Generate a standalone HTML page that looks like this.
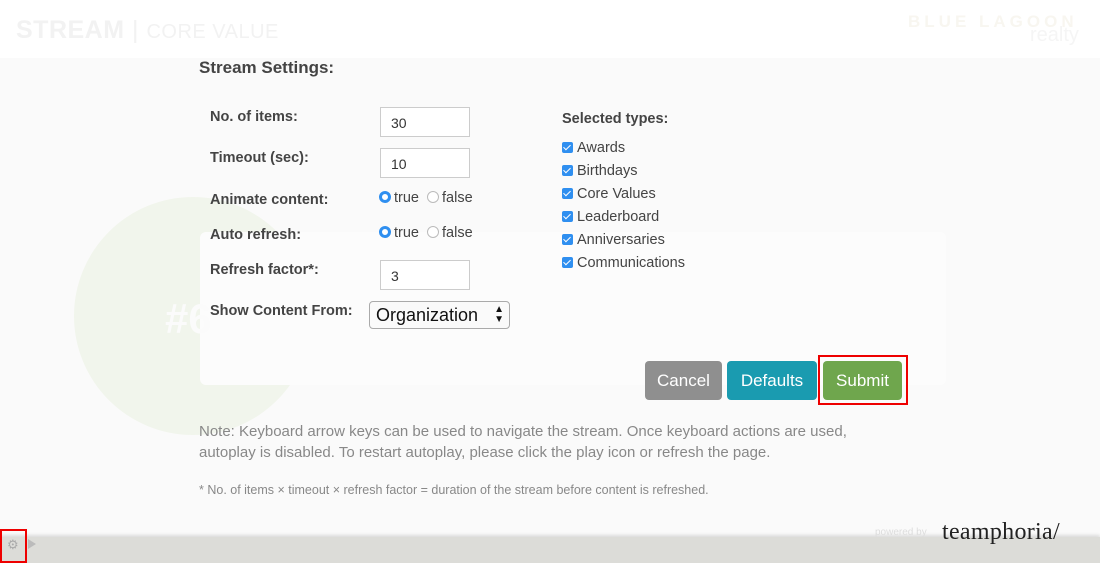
<!DOCTYPE html>
<html><head><meta charset="utf-8"><style>
*{box-sizing:border-box;margin:0;padding:0}
body{width:1100px;height:563px;overflow:hidden;background:#fafafa;font-family:"Liberation Sans",sans-serif;position:relative;color:#444}
.hdr{position:absolute;left:0;top:0;width:1100px;height:58px;background:#fff}
.abs{position:absolute}
.lbl{position:absolute;left:210px;font-size:14.5px;font-weight:bold;color:#444}
.inp{position:absolute;left:380px;width:90px;height:30px;border:1px solid #ccc;background:#fff;font-size:14px;padding:7px 0 0 10px;color:#333}
.radio{position:absolute;left:379px;font-size:14.5px;color:#444}
.rb{display:inline-block;width:12px;height:12px;border-radius:50%;vertical-align:-1px;margin-right:3px}
.on{background:#fff;border:3.5px solid #2f8ff0}
.off{border:1px solid #bbb;background:#fff;margin-left:4px}
.cb{position:absolute;left:562px;font-size:14.5px;color:#444}
.cb i{display:inline-block;width:11px;height:11px;background:#2f8ff0;border-radius:2px;margin-right:4px;vertical-align:-1px;position:relative}
.cb i:after{content:"";position:absolute;left:3px;top:1px;width:3px;height:6px;border:solid #fff;border-width:0 1.5px 1.5px 0;transform:rotate(45deg)}
.btn{position:absolute;top:361px;height:39px;border-radius:4px;color:#fff;font-size:17px;text-align:center;line-height:39px}
</style></head><body>
<div class="hdr"></div>
<div class="abs" style="left:16px;top:16px;font-size:25px;color:#f2f2f2;font-weight:bold;letter-spacing:0.5px">STREAM <span style="font-weight:normal">|</span> <span style="font-size:20px;font-weight:normal">CORE VALUE</span></div>
<div class="abs" style="left:908px;top:12px;font-size:17px;font-weight:bold;letter-spacing:4px;color:#f8f6f0">BLUE LAGOON</div>
<div class="abs" style="left:1030px;top:24px;font-size:20px;color:#f5f5f5">realty</div>
<div class="abs" style="left:74px;top:197px;width:238px;height:238px;border-radius:50%;background:#f1f5ec"></div>
<div class="abs" style="left:200px;top:232px;width:746px;height:153px;background:#fcfcfc;border-radius:6px"></div>
<div class="abs" style="left:165px;top:295px;font-size:42px;font-weight:bold;color:#fbfbfb">#6</div>
<div class="abs" style="left:199px;top:58px;font-size:17px;font-weight:bold;color:#444">Stream Settings:</div>
<div class="lbl" style="top:109px">No. of items:</div>
<div class="inp" style="top:107px">30</div>
<div class="lbl" style="top:150px">Timeout (sec):</div>
<div class="inp" style="top:148px">10</div>
<div class="lbl" style="top:192px">Animate content:</div>
<div class="radio" style="top:190px"><span class="rb on"></span>true <span class="rb off"></span>false</div>
<div class="lbl" style="top:227px">Auto refresh:</div>
<div class="radio" style="top:225px"><span class="rb on"></span>true <span class="rb off"></span>false</div>
<div class="lbl" style="top:262px">Refresh factor*:</div>
<div class="inp" style="top:260px">3</div>
<div class="lbl" style="top:303px">Show Content From:</div>
<div class="abs" style="left:369px;top:301px;width:141px;height:28px;border:1px solid #aaa;border-radius:4px;background:#fafafa;font-size:18px;color:#111;padding:3px 0 0 6px">Organization<span style="position:absolute;right:5px;top:3px;font-size:10px;line-height:10px">▲<br>▼</span></div>
<div class="abs" style="left:562px;top:111px;font-size:14.5px;font-weight:bold;color:#444">Selected types:</div>
<div class="cb" style="top:140px"><i></i>Awards</div>
<div class="cb" style="top:163px"><i></i>Birthdays</div>
<div class="cb" style="top:186px"><i></i>Core Values</div>
<div class="cb" style="top:209px"><i></i>Leaderboard</div>
<div class="cb" style="top:232px"><i></i>Anniversaries</div>
<div class="cb" style="top:255px"><i></i>Communications</div>
<div class="btn" style="left:645px;width:77px;background:#8f8f8f">Cancel</div>
<div class="btn" style="left:727px;width:90px;background:#1a9bb0">Defaults</div>
<div class="abs" style="left:818px;top:355px;width:90px;height:50px;border:2px solid #e00"></div>
<div class="btn" style="left:823px;width:79px;background:#6fa64d">Submit</div>
<div class="abs" style="left:199px;top:421px;font-size:15px;line-height:21px;color:#888;width:690px">Note: Keyboard arrow keys can be used to navigate the stream. Once keyboard actions are used, autoplay is disabled. To restart autoplay, please click the play icon or refresh the page.</div>
<div class="abs" style="left:199px;top:483px;font-size:12.5px;color:#888">* No. of items × timeout × refresh factor = duration of the stream before content is refreshed.</div>
<div class="abs" style="left:0;top:537px;width:1100px;height:26px;background:#dcdcd8;box-shadow:0 -2px 3px rgba(0,0,0,0.12)"></div>
<div class="abs" style="left:875px;top:527px;font-size:10px;color:#ddd">powered by</div>
<div class="abs" style="left:942px;top:519px;font-size:24px;font-family:'Liberation Serif',serif;color:#222;letter-spacing:0.3px">teamphoria/</div>
<div class="abs" style="left:0;top:529px;width:27px;height:34px;border:2px solid #e00"></div>
<div class="abs" style="left:7px;top:537px;font-size:13px;color:#aaa">⚙</div>
<div class="abs" style="left:28px;top:539px;width:0;height:0;border-left:8px solid #bbb;border-top:5px solid transparent;border-bottom:5px solid transparent"></div>
</body></html>
